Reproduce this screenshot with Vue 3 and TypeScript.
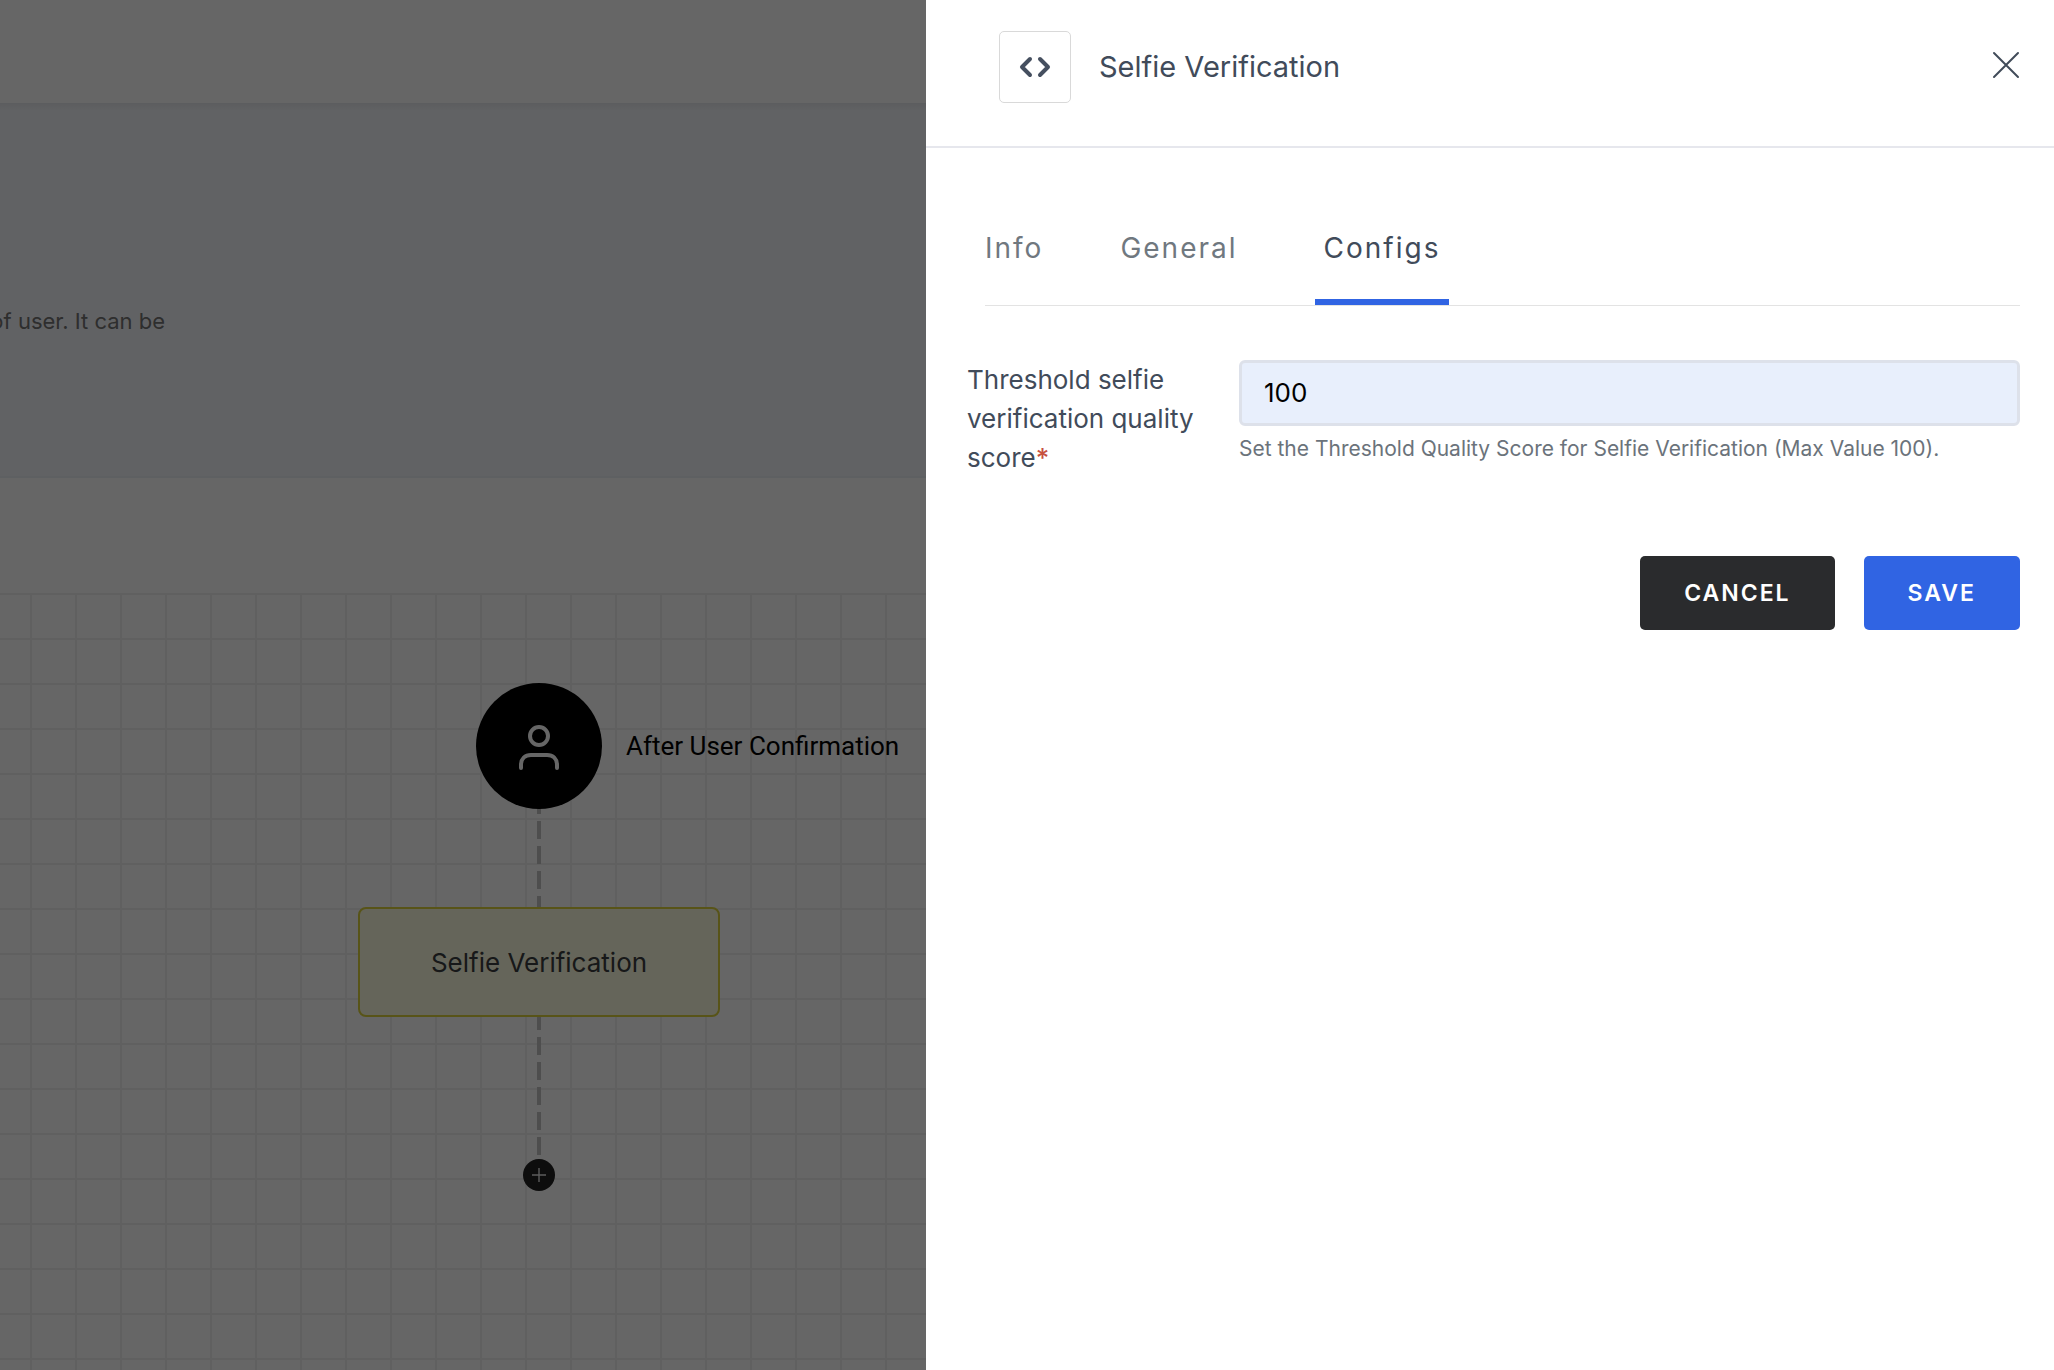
<script setup lang="ts">
import { ref } from 'vue'

const tabs = ['Info', 'General', 'Configs']
const activeTab = ref('Configs')
const threshold = ref('100')
</script>

<template>
  <div class="page">
    <main class="workspace">
      <div class="topbar"></div>
      <section class="hero">
        <p class="summary">of user. It can be</p>
      </section>
      <div class="toolbar"></div>
      <section class="canvas">
        <div class="connector from-start"></div>
        <div class="connector from-step"></div>
        <div class="start-node">
          <span class="start-icon">
            <svg width="42" height="48" viewBox="0 0 42 48" fill="none" stroke="#fff" stroke-width="4" stroke-linecap="round">
              <circle cx="21" cy="14" r="9" />
              <path d="M3 46v-3c0-6 4-10 10-10h16c6 0 10 4 10 10v3" />
            </svg>
          </span>
          <span class="start-label">After User Confirmation</span>
        </div>
        <div class="step-node">Selfie Verification</div>
        <button class="add-node" type="button" aria-label="Add step">
          <svg width="16" height="16" viewBox="0 0 16 16" stroke="#e6e6e6" stroke-width="1.4">
            <path d="M8 1v14M1 8h14" />
          </svg>
        </button>
      </section>
      <div class="backdrop"></div>
    </main>

    <aside class="drawer">
      <header class="drawer-header">
        <span class="code-icon">
          <svg width="32" height="22" viewBox="0 0 32 22" fill="none" stroke="#454f5f" stroke-width="4" stroke-linecap="round" stroke-linejoin="round">
            <path d="M11 3 3 11l8 8M21 3l8 8-8 8" />
          </svg>
        </span>
        <h1 class="title">Selfie Verification</h1>
        <button class="close" type="button" aria-label="Close">
          <svg width="28" height="28" viewBox="0 0 28 28" stroke="#414b59" stroke-width="2" stroke-linecap="round">
            <path d="M2 2l24 24M26 2 2 26" />
          </svg>
        </button>
      </header>

      <nav class="tabs">
        <button
          v-for="tab in tabs"
          :key="tab"
          type="button"
          class="tab"
          :class="{ active: tab === activeTab }"
          @click="activeTab = tab"
        >{{ tab }}</button>
      </nav>

      <form class="form" @submit.prevent>
        <div class="field">
          <label class="label" for="threshold">Threshold selfie verification quality score<span class="required">*</span></label>
          <div class="control">
            <input id="threshold" v-model="threshold" class="input" type="text" aria-describedby="threshold-help" />
            <p id="threshold-help" class="help">Set the Threshold Quality Score for Selfie Verification (Max Value 100).</p>
          </div>
        </div>
        <div class="actions">
          <button class="btn cancel" type="button">CANCEL</button>
          <button class="btn save" type="submit">SAVE</button>
        </div>
      </form>
    </aside>
  </div>
</template>

<style>
body {
  margin: 0;
}
</style>

<style scoped>
.page {
  display: flex;
  min-height: 100vh;
  font-family: Inter, "Liberation Sans", sans-serif;
  color: #414b5a;
  background: #fff;
}
.page * {
  box-sizing: border-box;
}
button {
  font-family: inherit;
  border: 0;
  cursor: pointer;
}
svg {
  display: block;
}

.workspace {
  position: relative;
  flex: 1;
  min-width: 0;
  display: flex;
  flex-direction: column;
  overflow: hidden;
  background: #fff;
}
.backdrop {
  position: absolute;
  inset: 0;
  background: rgba(0, 0, 0, 0.6);
}
.topbar {
  height: 103px;
}
.hero {
  height: 375px;
  padding-top: 202px;
  background: linear-gradient(#e6e8ed, #f3f6fa 8px);
  border-bottom: 2px solid #eceff4;
}
.summary {
  display: flex;
  justify-content: flex-end;
  width: 165px;
  margin: 0;
  font-size: 22px;
  line-height: 32px;
  white-space: nowrap;
  color: #737373;
}
.toolbar {
  height: 115px;
}
.canvas {
  position: relative;
  flex: 1;
  min-height: 640px;
  background-image:
    linear-gradient(#f0f0f0 2px, transparent 2px),
    linear-gradient(90deg, #f0f0f0 2px, transparent 2px);
  background-size: 45px 45px;
  background-position: 30px 0;
}
.connector {
  position: absolute;
  left: 537px;
  width: 4px;
  background: repeating-linear-gradient(#c4c4c4 0 18px, transparent 18px 25px);
}
.from-start {
  top: 203px;
  height: 112px;
}
.from-step {
  top: 419px;
  height: 146px;
}
.start-node {
  position: absolute;
  left: 476px;
  top: 90px;
  display: flex;
  align-items: center;
  gap: 24px;
}
.start-icon {
  display: flex;
  align-items: center;
  justify-content: center;
  width: 126px;
  height: 126px;
  border-radius: 50%;
  background: #000;
}
.start-label {
  font-family: Roboto, sans-serif;
  font-size: 26px;
  line-height: 32px;
  white-space: nowrap;
  color: #000;
}
.step-node {
  position: absolute;
  left: 358px;
  top: 314px;
  display: flex;
  align-items: center;
  justify-content: center;
  width: 362px;
  height: 110px;
  border: 2px solid #dcd23c;
  border-radius: 8px;
  background: #fcfce0;
  color: #3a3c3f;
  font-size: 26px;
}
.add-node {
  position: absolute;
  left: 523px;
  top: 566px;
  display: flex;
  align-items: center;
  justify-content: center;
  width: 32px;
  height: 32px;
  padding: 0;
  border-radius: 50%;
  background: #212121;
}

.drawer {
  flex: 0 0 1128px;
  background: #fff;
}
.drawer-header {
  display: flex;
  align-items: center;
  height: 148px;
  padding: 0 34px 12px 73px;
  border-bottom: 2px solid #e6e7ed;
}
.code-icon {
  display: flex;
  align-items: center;
  justify-content: center;
  width: 72px;
  height: 72px;
  border: 1px solid #d9d9d9;
  border-radius: 5px;
}
.title {
  flex: 1;
  margin: 0 0 0 28px;
  font-size: 29px;
  line-height: 40px;
  font-weight: 400;
}
.close {
  padding: 0 0 4px;
  background: none;
}

.tabs {
  display: flex;
  margin: 60px 34px 0 59px;
  height: 98px;
  gap: 77px;
  border-bottom: 1px solid #e3e3e3;
}
.tab {
  height: 97px;
  padding: 0 0 18px;
  font-size: 28px;
  line-height: 40px;
  letter-spacing: 2px;
  color: #70787f;
  background: none;
}
.tab.active {
  padding: 0 9px 12px;
  border-bottom: 6px solid #3064e3;
  color: #414b5a;
}

.form {
  padding: 54px 34px 40px 41px;
}
.field {
  display: flex;
}
.label {
  flex: 0 0 272px;
  padding-right: 40px;
  font-size: 26px;
  line-height: 39px;
}
.required {
  color: #c7513f;
  font-weight: 500;
}
.control {
  flex: 1;
  min-width: 0;
}
.input {
  display: block;
  width: 100%;
  height: 66px;
  padding: 0 22px 2px;
  border: 3px solid #dde1ea;
  border-radius: 6px;
  background: #e8effc;
  color: #000;
  font-family: inherit;
  font-size: 26px;
}
.help {
  margin: 7px 0 0;
  font-size: 21px;
  line-height: 32px;
  color: #6b737b;
}
.actions {
  display: flex;
  justify-content: flex-end;
  gap: 29px;
  margin-top: 79px;
}
.btn {
  height: 74px;
  padding: 0 44px;
  border-radius: 5px;
  color: #fff;
  font-size: 23px;
  font-weight: 600;
  letter-spacing: 2px;
}
.cancel {
  background: #2a2b2d;
}
.save {
  background: #3064e3;
}
</style>
